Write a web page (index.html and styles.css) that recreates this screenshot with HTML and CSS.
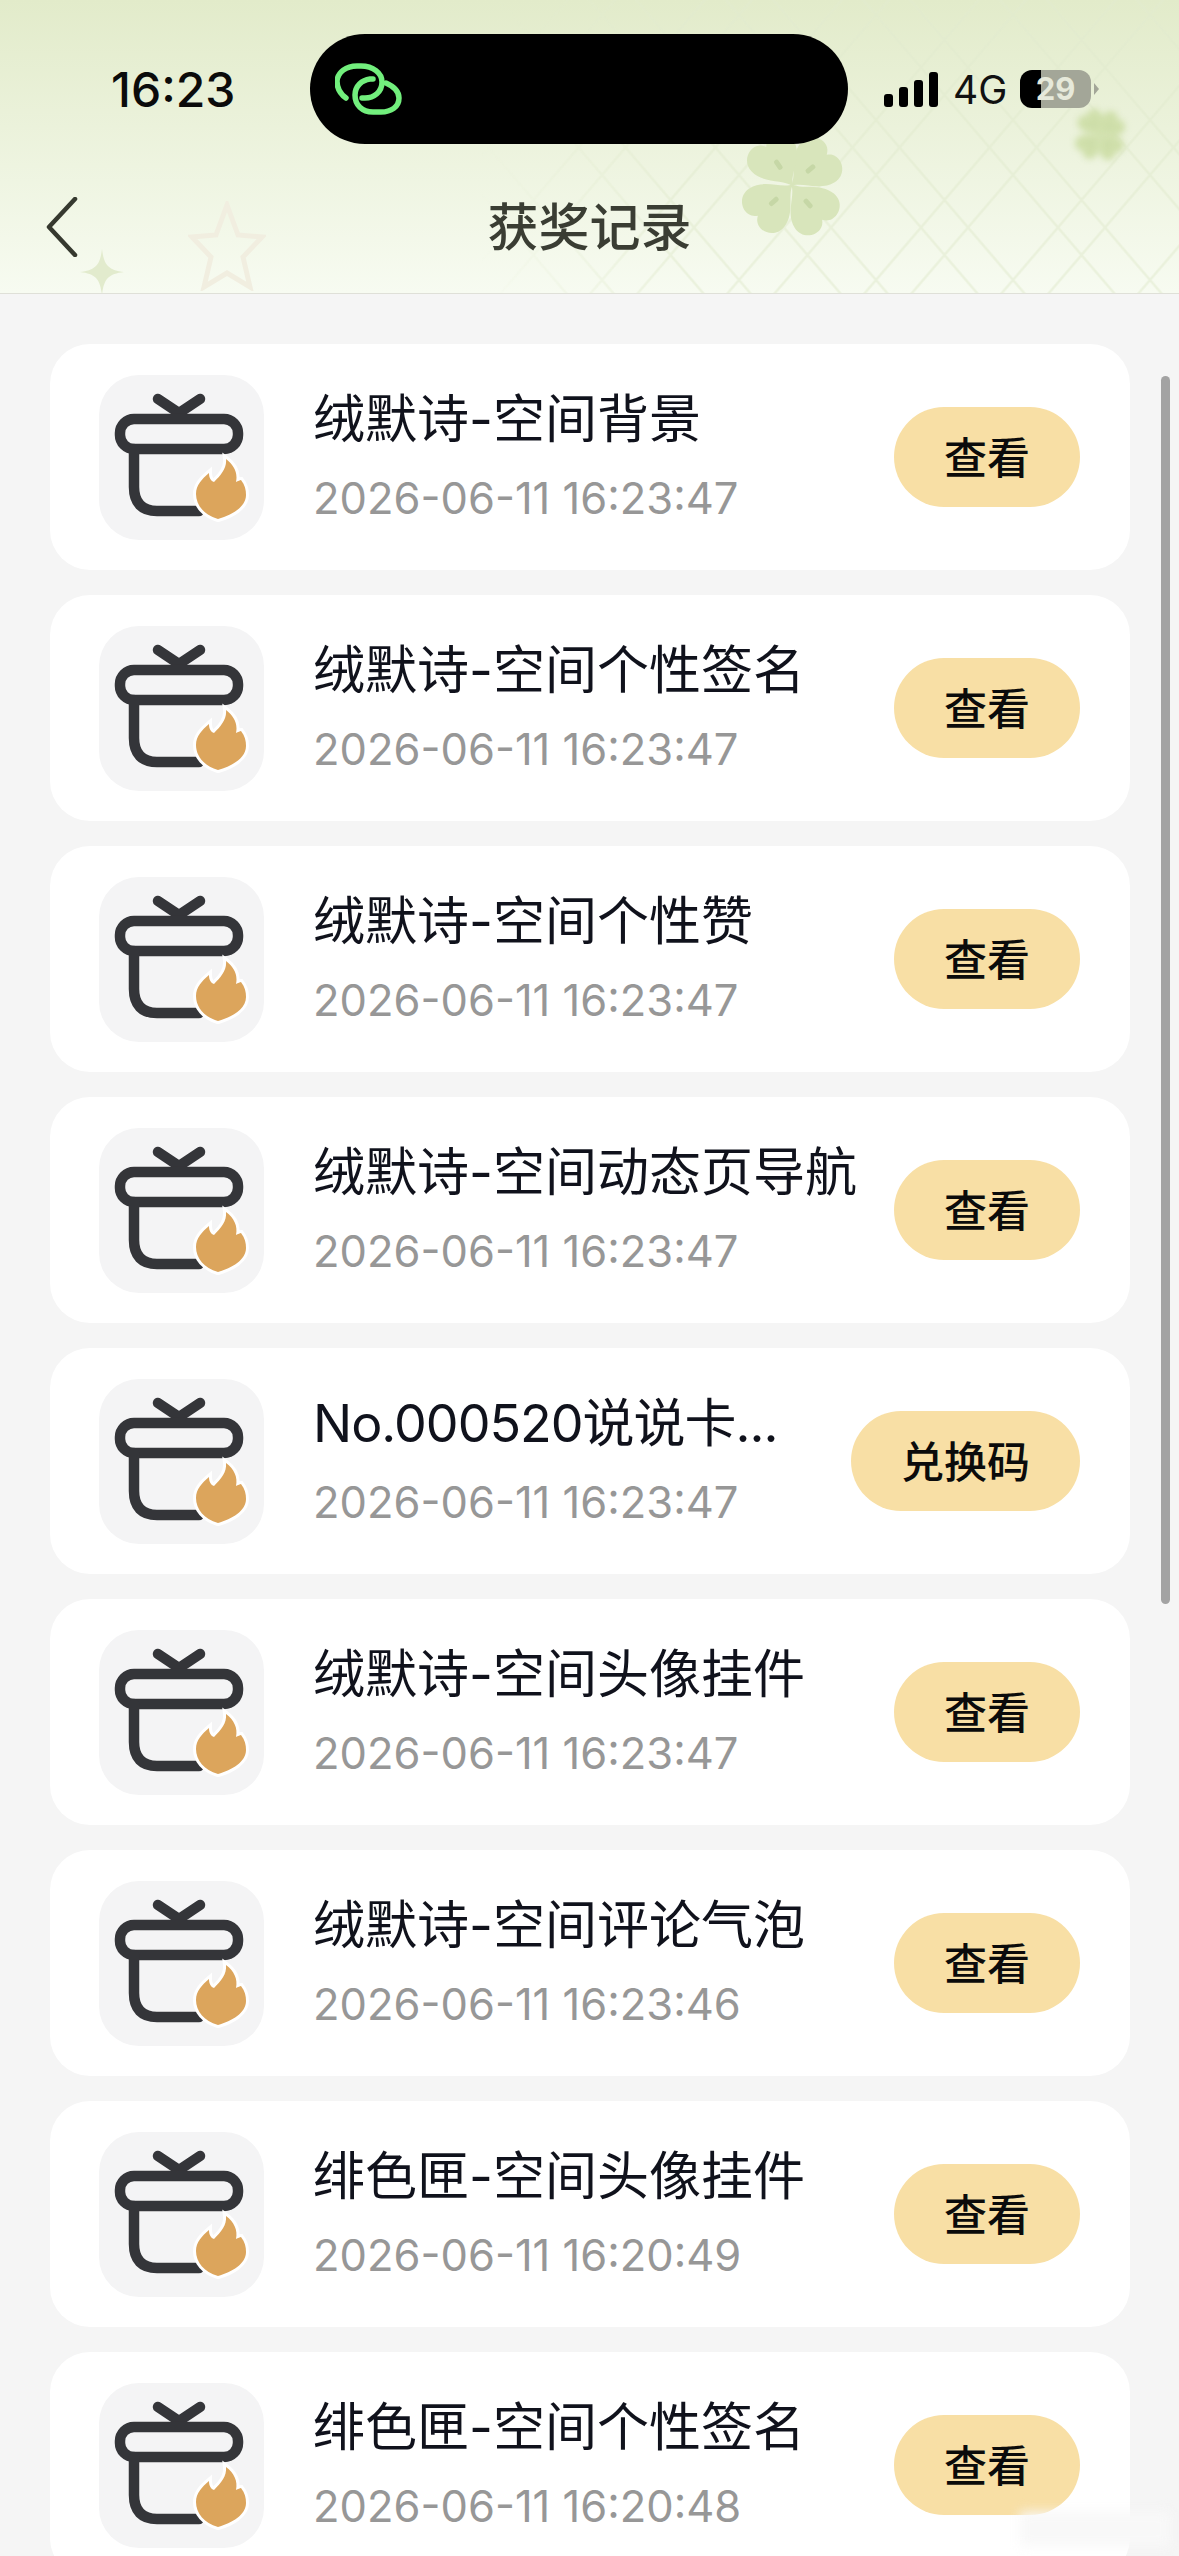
FILE: index.html
```html
<!DOCTYPE html>
<html lang="zh-CN">

<head>
  <meta charset="UTF-8">
  <meta name="viewport" content="width=device-width, initial-scale=1.0">
  <title>获奖记录</title>
  <link rel="stylesheet" href="styles.css">
</head>

<body>
  <svg class="sprites" width="0" height="0">
    <symbol id="gift" viewBox="0 0 165 165">
      <g fill="none" stroke="#343539" stroke-width="10.5" stroke-linecap="round">
        <path d="M59 24 L80 38 L101 24" />
        <rect x="21" y="44" width="118" height="30" rx="14" />
        <path d="M35 74 V112 C35 128 43 136 58 136 H100" />
      </g>
      <path d="M119 144 C105 140 97 130 97 119 C97 110 103 104 110 98 C110 103 112 106 115 107 C122 100 128 93 127 84 C135 90 139 98 137 107 C139 106 141 105 142 105 C146 110 147 115 147 120 C147 132 133 140 119 144 Z"
        fill="#dca55c" stroke="#fff" stroke-width="6" paint-order="stroke" />
    </symbol>
    <symbol id="leaf" viewBox="0 0 120 120">
      <path d="M60 62 C57 50 37 44 34 26 C32 13 44 6 52 8 C56 9 58 11 60 14 C62 11 64 9 68 8 C76 6 88 13 86 26 C83 44 63 50 60 62 Z" />
      <rect x="57.5" y="30" width="5" height="11" rx="2" fill="#c6d7a6" />
    </symbol>
    <symbol id="clover" viewBox="0 0 120 120">
      <use href="#leaf" width="120" height="120" transform="rotate(49 60 60)" />
      <use href="#leaf" width="120" height="120" transform="rotate(139 60 60)" />
      <use href="#leaf" width="120" height="120" transform="rotate(228 60 60)" />
      <use href="#leaf" width="120" height="120" transform="rotate(-34 60 60)" />
    </symbol>
  </svg>

  <header class="top">
    <svg class="lattice" width="700" height="293">
      <defs>
        <pattern id="plaid-a" width="137" height="160" patternUnits="userSpaceOnUse" patternTransform="translate(54.5 -65)">
          <path d="M0 0 L137 160 M137 0 L0 160" stroke="#e2ebcf" stroke-width="2.5" fill="none" />
        </pattern>
        <pattern id="plaid-b" width="137" height="160" patternUnits="userSpaceOnUse" patternTransform="translate(54.5 -120)">
          <path d="M0 0 L137 160 M137 0 L0 160" stroke="#e2ebcf" stroke-width="2.5" fill="none" />
        </pattern>
      </defs>
      <rect width="700" height="293" fill="url(#plaid-a)" />
      <rect width="700" height="293" fill="url(#plaid-b)" />
    </svg>
    <svg class="deco sparkle" viewBox="0 0 44 46"><path d="M22 0 C24 16 28 21 44 23 C28 25 24 30 22 46 C20 30 16 25 0 23 C16 21 20 16 22 0 Z" /></svg>
    <svg class="deco star" viewBox="0 0 78 90"><path d="M39 4 L50 34 L74 36 L55 56 L62 86 L39 72 L16 86 L23 56 L4 36 L28 34 Z" /></svg>
    <svg class="deco clover"><use href="#clover" /></svg>
    <svg class="deco clover-blur"><use href="#clover" /></svg>

    <div class="status">
      <span class="time">16:23</span>
      <div class="island">
        <svg class="link-icon" viewBox="0 0 67 52" fill="none" stroke="#72ef7d" stroke-width="5.5" stroke-linecap="round">
          <path d="M11 35 C4 30 2 23 2 18 C3 9 11 3 22 3 H26 C38 3 47 10 47 19 C47 29 39 35 30 35 H27" />
          <path d="M51 20 C60 24 64 30 64 35 C64 44 56 49 46 49 H38 C27 49 20 42 20 32 C20 23 27 17 35 16 H38" />
        </svg>
      </div>
      <svg class="signal" viewBox="0 0 54 35" fill="#000">
        <rect x="0" y="22" width="9" height="13" rx="3" />
        <rect x="15" y="15" width="9" height="20" rx="3" />
        <rect x="30" y="8" width="9" height="27" rx="3" />
        <rect x="45" y="0" width="9" height="35" rx="3" />
      </svg>
      <span class="net">4G</span>
      <div class="battery">29</div>
      <span class="nub"></span>
    </div>

    <nav class="nav">
      <svg class="back" viewBox="0 0 32 60" fill="none" stroke="#36392f" stroke-width="4.5" stroke-linecap="round" stroke-linejoin="round">
        <path d="M29 2 L3 30 L29 58" />
      </svg>
      <h1 class="page-title">获奖记录</h1>
    </nav>
  </header>

  <main class="list">
    <div class="card">
      <div class="thumb"><svg class="gift"><use href="#gift" /></svg></div>
      <div class="info">
        <p class="name">绒默诗-空间背景</p>
        <p class="date">2026-06-11 16:23:47</p>
      </div>
      <button class="btn">查看</button>
    </div>
    <div class="card">
      <div class="thumb"><svg class="gift"><use href="#gift" /></svg></div>
      <div class="info">
        <p class="name">绒默诗-空间个性签名</p>
        <p class="date">2026-06-11 16:23:47</p>
      </div>
      <button class="btn">查看</button>
    </div>
    <div class="card">
      <div class="thumb"><svg class="gift"><use href="#gift" /></svg></div>
      <div class="info">
        <p class="name">绒默诗-空间个性赞</p>
        <p class="date">2026-06-11 16:23:47</p>
      </div>
      <button class="btn">查看</button>
    </div>
    <div class="card">
      <div class="thumb"><svg class="gift"><use href="#gift" /></svg></div>
      <div class="info">
        <p class="name">绒默诗-空间动态页导航</p>
        <p class="date">2026-06-11 16:23:47</p>
      </div>
      <button class="btn">查看</button>
    </div>
    <div class="card">
      <div class="thumb"><svg class="gift"><use href="#gift" /></svg></div>
      <div class="info">
        <p class="name name-code">No.000520说说卡...</p>
        <p class="date">2026-06-11 16:23:47</p>
      </div>
      <button class="btn">兑换码</button>
    </div>
    <div class="card">
      <div class="thumb"><svg class="gift"><use href="#gift" /></svg></div>
      <div class="info">
        <p class="name">绒默诗-空间头像挂件</p>
        <p class="date">2026-06-11 16:23:47</p>
      </div>
      <button class="btn">查看</button>
    </div>
    <div class="card">
      <div class="thumb"><svg class="gift"><use href="#gift" /></svg></div>
      <div class="info">
        <p class="name">绒默诗-空间评论气泡</p>
        <p class="date">2026-06-11 16:23:46</p>
      </div>
      <button class="btn">查看</button>
    </div>
    <div class="card">
      <div class="thumb"><svg class="gift"><use href="#gift" /></svg></div>
      <div class="info">
        <p class="name">绯色匣-空间头像挂件</p>
        <p class="date">2026-06-11 16:20:49</p>
      </div>
      <button class="btn">查看</button>
    </div>
    <div class="card">
      <div class="thumb"><svg class="gift"><use href="#gift" /></svg></div>
      <div class="info">
        <p class="name">绯色匣-空间个性签名</p>
        <p class="date">2026-06-11 16:20:48</p>
      </div>
      <button class="btn">查看</button>
    </div>
  </main>

  <div class="scrollbar"></div>
  <div class="smudge"></div>
</body>

</html>
```

FILE: styles.css
```css
* {
  margin: 0;
  padding: 0;
  box-sizing: border-box;
  font-family: Inter, "Noto Sans CJK SC", sans-serif;
}

html, body {
  width: 1179px;
  height: 2556px;
  overflow: hidden;
  background-color: #f5f5f5;
}

.sprites {
  position: absolute;
}

.top {
  position: relative;
  height: 294px;
  overflow: hidden;
  background: linear-gradient(180deg, #e2ebca 0%, #f7fbf1 100%);
  border-bottom: 1px solid #dfe0d8;
}

.lattice {
  position: absolute;
  top: 0;
  right: 0;
  opacity: 0.55;
  -webkit-mask-image: linear-gradient(90deg, transparent 0, #000 200px);
  mask-image: linear-gradient(90deg, transparent 0, #000 200px);
}

.deco {
  position: absolute;
}

.sparkle {
  left: 80px;
  top: 249px;
  width: 44px;
  height: 46px;
  fill: #e2ebcd;
}

.star {
  left: 188px;
  top: 201px;
  width: 78px;
  height: 90px;
  fill: none;
  stroke: #f1eee0;
  stroke-width: 5;
}

.clover {
  left: 732px;
  top: 125px;
  width: 120px;
  height: 120px;
  fill: #d8e5bb;
}

.clover-blur {
  left: 1070px;
  top: 105px;
  width: 60px;
  height: 60px;
  fill: #cfdfaa;
  filter: blur(3px);
}

.status {
  position: relative;
  display: flex;
  align-items: center;
  height: 144px;
  padding: 34px 0 0 111px;
}

.time {
  width: 199px;
  font-size: 48px;
  font-weight: 550;
  color: #0b0b0b;
}

.island {
  display: flex;
  align-items: center;
  width: 538px;
  height: 110px;
  padding-left: 25px;
  background-color: #000;
  border-radius: 55px;
}

.link-icon {
  width: 67px;
  height: 52px;
}

.signal {
  width: 54px;
  height: 35px;
  margin-left: 36px;
}

.net {
  width: 67px;
  margin-left: 15px;
  font-size: 39px;
  color: #111;
}

.battery {
  width: 71px;
  height: 38px;
  border-radius: 12px;
  background: linear-gradient(90deg, #000 21px, #a3a698 21px);
  color: #e6e9da;
  font-size: 31px;
  font-weight: 700;
  line-height: 38px;
  text-align: center;
}

.nub {
  width: 0;
  height: 0;
  margin-left: 3px;
  border-left: 5px solid #a3a698;
  border-top: 6px solid transparent;
  border-bottom: 6px solid transparent;
}

.nav {
  position: relative;
  display: flex;
  align-items: center;
  justify-content: center;
  height: 149px;
  padding-top: 11px;
}

.back {
  position: absolute;
  left: 46px;
  top: 53px;
  width: 32px;
  height: 60px;
}

.page-title {
  font-size: 51px;
  font-weight: 500;
  color: #3a3d33;
}

.list {
  display: flex;
  flex-direction: column;
  gap: 25px;
  padding: 50px 49px 0 50px;
}

.card {
  display: flex;
  flex-shrink: 0;
  align-items: center;
  height: 226px;
  padding: 0 50px 0 49px;
  background-color: #fff;
  border-radius: 40px;
}

.thumb {
  flex-shrink: 0;
  width: 165px;
  height: 165px;
  background-color: #f4f4f5;
  border-radius: 40px;
}

.gift {
  display: block;
  width: 165px;
  height: 165px;
}

.info {
  flex: 1;
  min-width: 0;
  margin: 0 20px 0 49px;
  padding-bottom: 4px;
}

.name {
  font-size: 52px;
  line-height: 64px;
  color: #10121c;
  white-space: nowrap;
}

.name-code {
  letter-spacing: -1px;
}

.date {
  margin-top: 21px;
  font-size: 43.5px;
  line-height: 50px;
  color: #979797;
  white-space: nowrap;
}

.btn {
  flex-shrink: 0;
  height: 100px;
  padding: 0 50px 5px;
  border: none;
  border-radius: 50px;
  background-color: #f8dfa5;
  color: #0b0b0b;
  font-size: 43px;
  font-weight: 500;
}

.scrollbar {
  position: absolute;
  left: 1161px;
  top: 376px;
  width: 9px;
  height: 1228px;
  border-radius: 5px;
  background-color: #a3a3a3;
}

.smudge {
  position: absolute;
  left: 1020px;
  top: 2512px;
  width: 150px;
  height: 34px;
  background-color: #f8f8f8;
  filter: blur(6px);
}
```
